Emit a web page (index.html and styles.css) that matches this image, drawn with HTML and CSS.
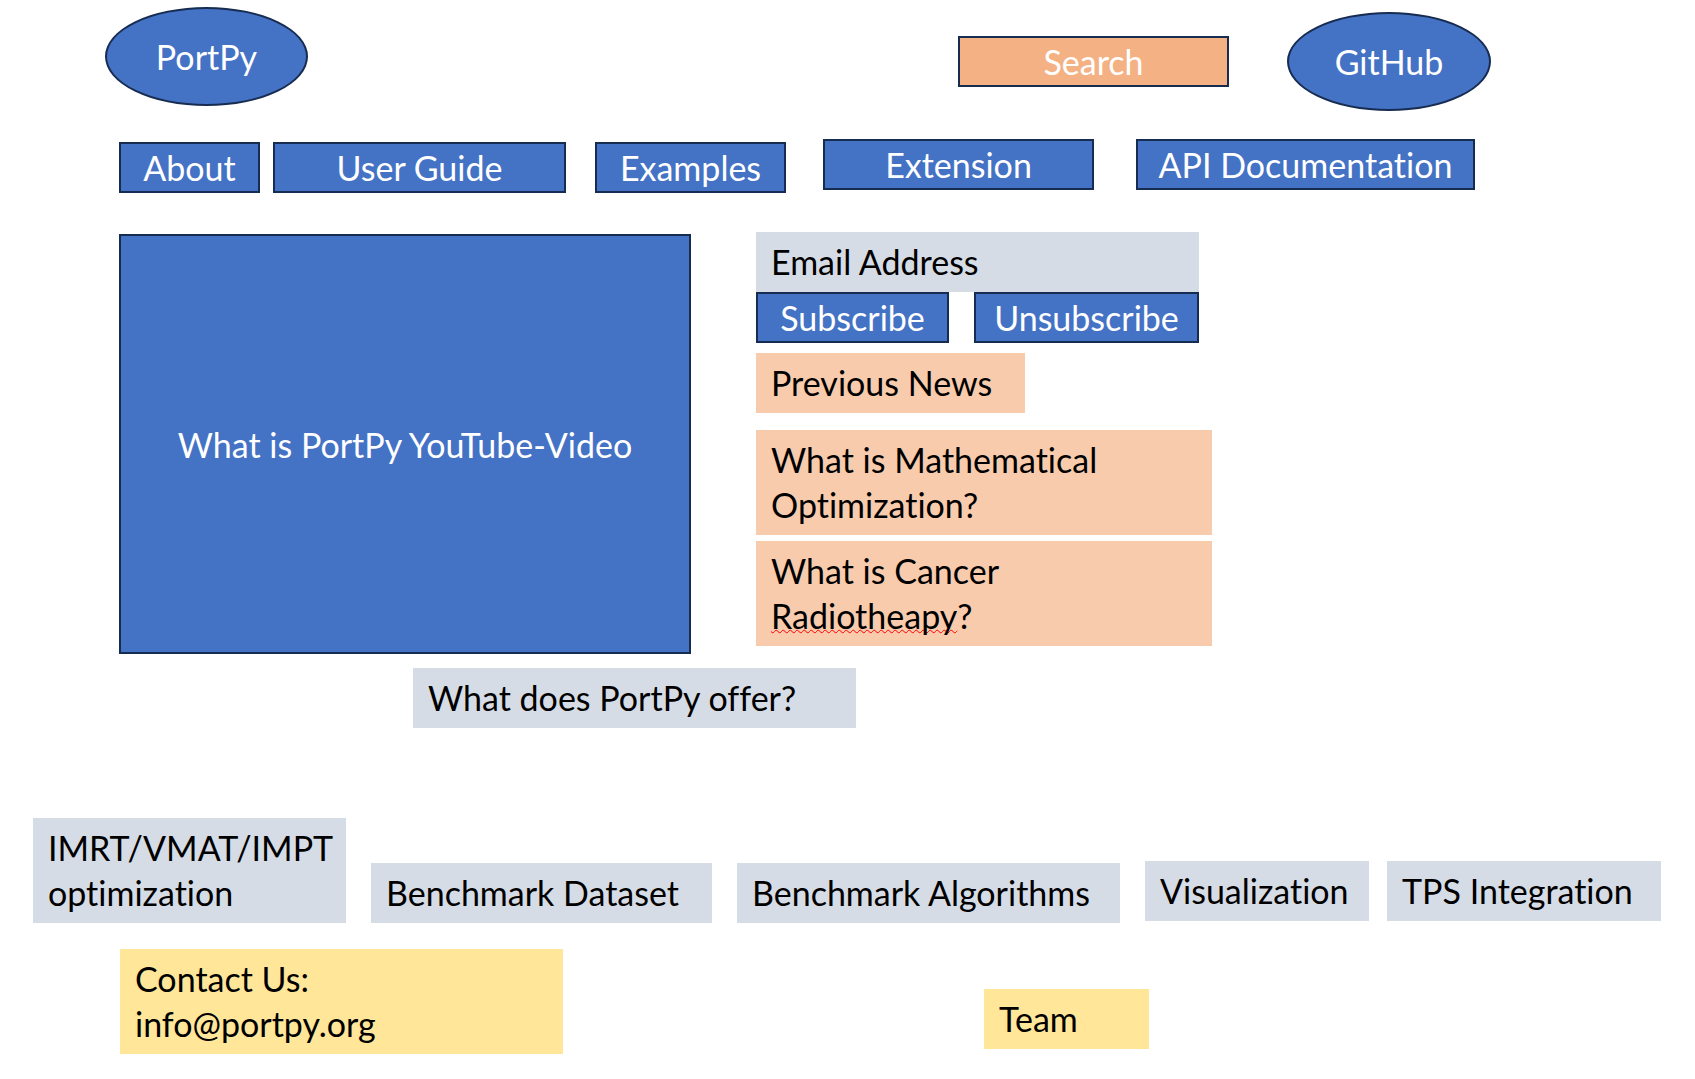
FILE: index.html
```
<!DOCTYPE html>
<html lang="en">
<head>
<meta charset="utf-8">
<meta name="viewport" content="width=device-width, initial-scale=1">
<title>PortPy</title>
<link rel="stylesheet" href="styles.css">
</head>
<body>
<header class="header">
  <a class="button oval logo" href="#home">PortPy</a>
  <input class="button search" type="text" placeholder="Search" aria-label="Search">
  <a class="button oval github" href="#github">GitHub</a>
</header>

<nav class="nav" aria-label="Main">
  <a class="button lowered about" href="#about">About</a>
  <a class="button lowered guide" href="#guide">User Guide</a>
  <a class="button lowered examples" href="#examples">Examples</a>
  <a class="button extension" href="#extension">Extension</a>
  <a class="button api" href="#api">API Documentation</a>
</nav>

<main>
  <section class="intro">
    <a class="button video" href="#video">What is PortPy YouTube-Video</a>
    <div class="side">
      <form class="subscribe">
        <input class="box email" type="email" placeholder="Email Address" aria-label="Email Address">
        <button class="button join" type="button">Subscribe</button>
        <button class="button leave" type="button">Unsubscribe</button>
      </form>
      <a class="box peach news" href="#news">Previous News</a>
      <a class="box peach topic" href="#optimization">What is Mathematical<br>Optimization?</a>
      <a class="box peach topic" href="#radiotherapy">What is Cancer<br><span class="misspelt">Radiotheapy</span>?</a>
    </div>
  </section>

  <section class="offer">
    <h2 class="box offer-title">What does PortPy offer?</h2>
  </section>

  <section class="features">
    <a class="box imrt" href="#imrt">IMRT/VMAT/IMPT<br>optimization</a>
    <a class="box dataset" href="#dataset">Benchmark Dataset</a>
    <a class="box algorithms" href="#algorithms">Benchmark Algorithms</a>
    <a class="box visualization" href="#visualization">Visualization</a>
    <a class="box tps" href="#tps">TPS Integration</a>
  </section>
</main>

<footer class="footer">
  <a class="box yellow contact" href="mailto:info@portpy.org">Contact Us:<br>info@portpy.org</a>
  <a class="box yellow team" href="#team">Team</a>
</footer>
</body>
</html>
```
FILE: styles.css
```
:root {
  --blue: #4472c4;
  --outline: #172c51;
  --grey: #d6dce5;
  --peach: #f8cbad;
  --orange: #f4b183;
  --yellow: #ffe699;
}

* {
  box-sizing: border-box;
}

body {
  margin: 0;
  padding: 7px 0 23px;
  background: #fff;
  color: #000;
  font: 34px/45px Lato, "Open Sans", sans-serif;
  font-variant-ligatures: none;
}

a {
  color: inherit;
  text-decoration: none;
}

/* Outlined, centred shapes */
.button {
  display: block;
  min-width: 0;
  margin: 0;
  padding: 1px 0;
  border: 2px solid var(--outline);
  border-radius: 0;
  background: var(--blue);
  color: #fff;
  font: inherit;
  font-variant-ligatures: none;
  text-align: center;
  white-space: nowrap;
}

/* Flat, left-aligned blocks */
.box {
  display: block;
  min-width: 0;
  margin: 0;
  padding: 7px 0 8px 15px;
  border: 0;
  background: var(--grey);
  color: #000;
  font: inherit;
  font-variant-ligatures: none;
  white-space: nowrap;
}

.peach { background: var(--peach); }
.yellow { background: var(--yellow); }

/* Header */
.header {
  display: grid;
  grid-template-columns: 105fr 203fr 650fr 271fr 58fr 204fr 204fr;
  align-items: start;
}

.oval {
  padding: 25px 0;
  border-radius: 50%;
}

.logo { grid-column: 2; }

.search {
  grid-column: 4;
  align-self: center;
  width: 100%;
  height: 51px;
  margin-top: 5px;
  background: var(--orange);
  appearance: none;
}

.github {
  grid-column: 6;
  margin-top: 5px;
}

::placeholder {
  color: inherit;
  opacity: 1;
}

/* Navigation */
.nav {
  display: grid;
  grid-template-columns: 119fr 141fr 13fr 293fr 29fr 191fr 37fr 271fr 42fr 339fr 220fr;
  align-items: start;
  margin-top: 28px;
}

.lowered { margin-top: 3px; }
.about { grid-column: 2; }
.guide { grid-column: 4; }
.examples { grid-column: 6; }
.extension { grid-column: 8; }
.api { grid-column: 10; }

/* Video and side column */
.intro {
  display: grid;
  grid-template-columns: 119fr 572fr 65fr 456fr 483fr;
  align-items: start;
  margin-top: 39px;
}

.video {
  grid-column: 2;
  display: grid;
  place-items: center;
  margin-top: 2px;
  aspect-ratio: 572 / 420;
}

.side {
  grid-column: 4;
  display: grid;
  gap: 6px;
}

.subscribe {
  display: grid;
  grid-template-columns: 193fr 25fr 225fr 13fr;
}

.email {
  grid-column: 1 / 4;
  width: 100%;
  height: 60px;
}

.join { grid-column: 1; }
.leave { grid-column: 3; }

.news {
  width: 59%;
  margin: 4px 0 11px;
}

.misspelt {
  text-decoration: underline wavy #f00 1px;
  text-decoration-skip-ink: none;
  text-underline-offset: 0;
}

/* Offer heading */
.offer {
  display: grid;
  grid-template-columns: 413fr 443fr 839fr;
  margin-top: 14px;
}

.offer-title { grid-column: 2; }

/* Features */
.features {
  display: grid;
  grid-template-columns: 33fr 313fr 25fr 341fr 25fr 383fr 25fr 224fr 18fr 274fr 34fr;
  align-items: end;
  margin-top: 90px;
}

.imrt { grid-column: 2; }
.dataset { grid-column: 4; }
.algorithms { grid-column: 6; }
.visualization { grid-column: 8; }
.tps { grid-column: 10; }

.visualization,
.tps {
  margin-bottom: 2px;
}

/* Footer */
.footer {
  display: grid;
  grid-template-columns: 120fr 443fr 421fr 165fr 546fr;
  align-items: end;
  margin-top: 26px;
}

.contact { grid-column: 2; }

.team {
  grid-column: 4;
  margin-bottom: 5px;
}
```
